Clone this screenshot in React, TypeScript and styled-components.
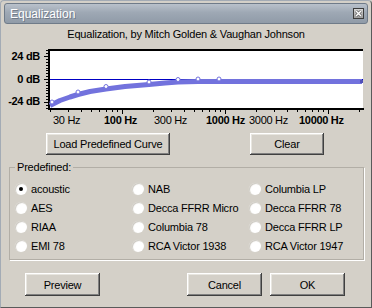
import React from "react";
import styled, { createGlobalStyle } from "styled-components";

const Global = createGlobalStyle`
  html, body { margin: 0; padding: 0; background: #d4d0c8; }
  body { font-family: "Liberation Sans", Arial, sans-serif; font-size: 11px; }
  * { box-sizing: border-box; }
`;

const Window = styled.div`
  width: 372px;
  height: 308px;
  background: #d4d0c8;
  border: 1px solid;
  border-color: #a3abb5 #5a5a5a #5a5a5a #a3abb5;
  border-radius: 4px 4px 0 0;
  display: flex;
  flex-direction: column;
  color: #000;
`;

const TitleBar = styled.div`
  margin: 2px 3px 0 3px;
  height: 21px;
  border: 1px solid #6f7b89;
  border-radius: 3px;
  background: linear-gradient(#b9c1cb 0%, #9ea8b4 45%, #909ba8 100%);
  display: flex;
  align-items: center;
  justify-content: space-between;
  padding: 0 3px 0 5px;
`;

const TitleText = styled.span`
  color: #fff;
  font-size: 12px;
  line-height: 14px;
  text-shadow: 1px 1px 0 rgba(60, 70, 85, 0.45);
`;

const Subtitle = styled.div`
  margin-top: 4px;
  line-height: 13px;
  text-align: center;
  letter-spacing: -0.2px;
`;

const Chart = styled.svg`
  display: block;
  margin-top: 3px;
`;

const ButtonRow = styled.div`
  margin-top: 5px;
  display: flex;
  gap: 80px;
  padding-left: 45px;
`;

const Button = styled.button<{ $w: number; $h: number }>`
  width: ${(p) => p.$w}px;
  height: ${(p) => p.$h}px;
  padding: 0;
  border: none;
  background: #d4d0c8;
  box-shadow: inset -1px -1px 0 #404040, inset 1px 1px 0 #ffffff,
    inset -2px -2px 0 #808080, inset 2px 2px 0 #e8e6e0;
  font-family: "Liberation Sans", Arial, sans-serif;
  font-size: 11px;
  letter-spacing: -0.2px;
  color: #000;
`;

const Group = styled.fieldset`
  margin: 6px 0 0 8px;
  width: 355px;
  min-width: 0;
  padding: 5px 0 4px 5px;
  border: 1px solid #b2aea6;
  box-shadow: 1px 1px 0 #ffffff;
`;

const Legend = styled.legend`
  padding: 0 2px;
  line-height: 13px;
  letter-spacing: -0.2px;
`;

const RadioGrid = styled.div`
  display: grid;
  grid-template-columns: 117px 117px auto;
  grid-auto-rows: 19px;
`;

const RadioItem = styled.label`
  display: flex;
  align-items: center;
  gap: 4px;
  letter-spacing: -0.2px;
  white-space: nowrap;
`;

const RadioCircle = styled.span<{ $checked: boolean }>`
  width: 12px;
  height: 12px;
  border-radius: 50%;
  flex: none;
  background: radial-gradient(circle at 60% 60%, #ffffff 45%, #e9e7e2 100%);
  box-shadow: inset 1px 1px 0 #cfccc5, 0 0 0 0.5px #d8d5ce;
  display: flex;
  align-items: center;
  justify-content: center;
  &::after {
    content: "";
    width: 4px;
    height: 4px;
    border-radius: 50%;
    background: ${(p) => (p.$checked ? "#000" : "transparent")};
  }
`;

const BottomRow = styled.div`
  margin-top: 13px;
  display: flex;
  padding: 0 26px 0 24px;
  gap: 8px;
`;

const Spacer = styled.div`
  flex: 1;
`;

const CloseBox = () => (
  <svg width="11" height="11" viewBox="0 0 11 11">
    <defs>
      <linearGradient id="cg" x1="0" y1="0" x2="0" y2="1">
        <stop offset="0" stopColor="#d8d8d8" />
        <stop offset="1" stopColor="#9a9a9a" />
      </linearGradient>
    </defs>
    <rect x="0.5" y="0.5" width="10" height="10" fill="url(#cg)" stroke="#3c3c3c" />
    <path d="M3 3 L8 8 M8 3 L3 8" stroke="#505050" strokeWidth="2.6" />
    <path d="M3 3 L8 8 M8 3 L3 8" stroke="#ffffff" strokeWidth="1.5" />
  </svg>
);

const fx = (f: number) => 225 + 103 * Math.log10(f / 1000);
const fy = (db: number) => 79.5 - db * 0.958;

const curve: [number, number][] = [
  [50, 105.5],
  [52, 104.5],
  [60, 100.5],
  [70, 97],
  [78, 94.5],
  [90, 91.5],
  [106, 89],
  [125, 86.5],
  [149, 84.5],
  [165, 83],
  [178, 82],
  [198, 81.6],
  [219, 81.5],
  [362, 81.5],
];

const knots: [number, number][] = [
  [52, 102],
  [78, 92],
  [106, 86.5],
  [149, 82],
  [178, 79.5],
  [198, 79],
  [219, 79],
];

const xLabels: { t: string; x: number; b: boolean }[] = [
  { t: "30 Hz", x: 53, b: false },
  { t: "100 Hz", x: 104, b: true },
  { t: "300 Hz", x: 154, b: false },
  { t: "1000 Hz", x: 206, b: true },
  { t: "3000 Hz", x: 249, b: false },
  { t: "10000 Hz", x: 299, b: true },
];

const EqChart = () => {
  const xTicks: { x: number; major: boolean }[] = [];
  [10, 100, 1000, 10000].forEach((d) => {
    for (let m = 1; m <= 9; m++) {
      const f = d * m;
      const x = Math.round(fx(f)) + 0.5;
      if (f >= 20 && x <= 363) xTicks.push({ x, major: m === 1 });
    }
  });
  const yTicks: { y: number; major: boolean }[] = [];
  for (let db = -30; db <= 30; db += 3) {
    yTicks.push({ y: Math.round(fy(db) - 0.5) + 0.5, major: db % 24 === 0 });
  }
  const pts = curve.map((p) => p.join(",")).join(" ");
  const font = { fontFamily: "'Liberation Sans', Arial, sans-serif", fontSize: 11 };
  return (
    <Chart width={370} height={84} viewBox="1 44 370 84">
      <rect x={50} y={51} width={313} height={57} fill="#ffffff" />
      <rect x={48} y={49} width={315} height={2} fill="#000" />
      <rect x={48} y={49} width={2} height={61} fill="#000" />
      <rect x={48} y={108} width={316} height={2} fill="#000" />
      {yTicks.map((t, i) => (
        <line key={i} x1={t.major ? 44 : 46} x2={48} y1={t.y} y2={t.y} stroke="#000" strokeWidth={1} />
      ))}
      {xTicks.map((t, i) => (
        <line key={i} x1={t.x} x2={t.x} y1={110} y2={t.major ? 114 : 112} stroke="#000" strokeWidth={1} />
      ))}
      <line x1={50} x2={363} y1={79.5} y2={79.5} stroke="#0000c4" strokeWidth={1} />
      <polyline points={pts} fill="none" stroke="#7272dd" strokeWidth={5} strokeLinejoin="round" />
      {knots.map(([x, y], i) => (
        <circle key={i} cx={x} cy={y} r={2} fill="#ffffff" stroke="#7272dd" strokeWidth={1} />
      ))}
      <rect x={360} y={80} width={3} height={3} fill="#5050b8" />
      <g {...font} fontWeight="bold" letterSpacing={-0.3} textAnchor="end">
        <text x={40} y={60}>24 dB</text>
        <text x={40} y={83}>0 dB</text>
        <text x={40} y={105}>-24 dB</text>
      </g>
      <g {...font} letterSpacing={-0.3}>
        {xLabels.map((l) => (
          <text key={l.t} x={l.x} y={124} fontWeight={l.b ? "bold" : "normal"}>
            {l.t}
          </text>
        ))}
      </g>
    </Chart>
  );
};

const presets = [
  "acoustic",
  "NAB",
  "Columbia LP",
  "AES",
  "Decca FFRR Micro",
  "Decca FFRR 78",
  "RIAA",
  "Columbia 78",
  "Decca FFRR LP",
  "EMI 78",
  "RCA Victor 1938",
  "RCA Victor 1947",
];

export default function App() {
  return (
    <>
      <Global />
      <Window>
        <TitleBar>
          <TitleText>Equalization</TitleText>
          <CloseBox />
        </TitleBar>
        <Subtitle>Equalization, by Mitch Golden &amp; Vaughan Johnson</Subtitle>
        <EqChart />
        <ButtonRow>
          <Button $w={124} $h={22}>Load Predefined Curve</Button>
          <Button $w={74} $h={22}>Clear</Button>
        </ButtonRow>
        <Group>
          <Legend>Predefined:</Legend>
          <RadioGrid>
            {presets.map((p) => (
              <RadioItem key={p}>
                <RadioCircle $checked={p === "acoustic"} />
                {p}
              </RadioItem>
            ))}
          </RadioGrid>
        </Group>
        <BottomRow>
          <Button $w={75} $h={23}>Preview</Button>
          <Spacer />
          <Button $w={75} $h={23}>Cancel</Button>
          <Button $w={75} $h={23}>OK</Button>
        </BottomRow>
      </Window>
    </>
  );
}
